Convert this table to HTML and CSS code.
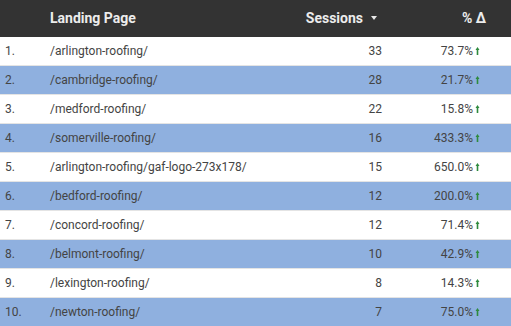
FILE: index.html
```html
<!DOCTYPE html>
<html>
<head>
<meta charset="utf-8">
<link rel="stylesheet" href="styles.css">
</head>
<body>
<div class="table">
  <div class="row head">
    <div class="c-num"></div>
    <div class="c-page">Landing Page</div>
    <div class="c-sess">Sessions <svg class="sort" width="6" height="4" viewBox="0 0 6 4"><path d="M0 0H6L3 4Z" fill="#e8e8e8"/></svg></div>
    <div class="c-pct">% Δ</div>
  </div>
  <div class="row"><div class="c-num">1.</div><div class="c-page">/arlington-roofing/</div><div class="c-sess">33</div><div class="c-pct">73.7%<svg class="up" width="11" height="8" viewBox="0 0 11 8"><path d="M2.5 0L4.5 3H3.3V8H1.7V3H0.5Z" fill="#2e8b3e"/></svg></div></div>
  <div class="row alt"><div class="c-num">2.</div><div class="c-page">/cambridge-roofing/</div><div class="c-sess">28</div><div class="c-pct">21.7%<svg class="up" width="11" height="8" viewBox="0 0 11 8"><path d="M2.5 0L4.5 3H3.3V8H1.7V3H0.5Z" fill="#2e8b3e"/></svg></div></div>
  <div class="row"><div class="c-num">3.</div><div class="c-page">/medford-roofing/</div><div class="c-sess">22</div><div class="c-pct">15.8%<svg class="up" width="11" height="8" viewBox="0 0 11 8"><path d="M2.5 0L4.5 3H3.3V8H1.7V3H0.5Z" fill="#2e8b3e"/></svg></div></div>
  <div class="row alt"><div class="c-num">4.</div><div class="c-page">/somerville-roofing/</div><div class="c-sess">16</div><div class="c-pct">433.3%<svg class="up" width="11" height="8" viewBox="0 0 11 8"><path d="M2.5 0L4.5 3H3.3V8H1.7V3H0.5Z" fill="#2e8b3e"/></svg></div></div>
  <div class="row"><div class="c-num">5.</div><div class="c-page">/arlington-roofing/gaf-logo-273x178/</div><div class="c-sess">15</div><div class="c-pct">650.0%<svg class="up" width="11" height="8" viewBox="0 0 11 8"><path d="M2.5 0L4.5 3H3.3V8H1.7V3H0.5Z" fill="#2e8b3e"/></svg></div></div>
  <div class="row alt"><div class="c-num">6.</div><div class="c-page">/bedford-roofing/</div><div class="c-sess">12</div><div class="c-pct">200.0%<svg class="up" width="11" height="8" viewBox="0 0 11 8"><path d="M2.5 0L4.5 3H3.3V8H1.7V3H0.5Z" fill="#2e8b3e"/></svg></div></div>
  <div class="row"><div class="c-num">7.</div><div class="c-page">/concord-roofing/</div><div class="c-sess">12</div><div class="c-pct">71.4%<svg class="up" width="11" height="8" viewBox="0 0 11 8"><path d="M2.5 0L4.5 3H3.3V8H1.7V3H0.5Z" fill="#2e8b3e"/></svg></div></div>
  <div class="row alt"><div class="c-num">8.</div><div class="c-page">/belmont-roofing/</div><div class="c-sess">10</div><div class="c-pct">42.9%<svg class="up" width="11" height="8" viewBox="0 0 11 8"><path d="M2.5 0L4.5 3H3.3V8H1.7V3H0.5Z" fill="#2e8b3e"/></svg></div></div>
  <div class="row"><div class="c-num">9.</div><div class="c-page">/lexington-roofing/</div><div class="c-sess">8</div><div class="c-pct">14.3%<svg class="up" width="11" height="8" viewBox="0 0 11 8"><path d="M2.5 0L4.5 3H3.3V8H1.7V3H0.5Z" fill="#2e8b3e"/></svg></div></div>
  <div class="row alt"><div class="c-num">10.</div><div class="c-page">/newton-roofing/</div><div class="c-sess">7</div><div class="c-pct">75.0%<svg class="up" width="11" height="8" viewBox="0 0 11 8"><path d="M2.5 0L4.5 3H3.3V8H1.7V3H0.5Z" fill="#2e8b3e"/></svg></div></div>
</div>
</body>
</html>
```
FILE: styles.css
```css
html, body {
  margin: 0;
  padding: 0;
  background: #ffffff;
}
body {
  font-family: Roboto, "Liberation Sans", sans-serif;
  width: 511px;
  height: 326px;
  overflow: hidden;
}
.table {
  display: flex;
  flex-direction: column;
}
.row {
  display: grid;
  grid-template-columns: 50px 250px 82px 104px;
  align-items: center;
  height: 28px;
  border-bottom: 1px solid #e4e4e4;
  font-size: 12px;
  color: #444444;
  background: #ffffff;
}
.row.alt {
  background: #8fb0df;
}
.row.head {
  height: 36px;
  border-bottom: 1px solid #333333;
  background: #333333;
  color: #ececec;
  font-size: 14px;
  font-weight: 700;
}
.c-num {
  padding-left: 5px;
}
.c-sess {
  text-align: right;
}
.c-pct {
  display: flex;
  justify-content: flex-end;
  align-items: center;
}
.head .c-sess {
  display: flex;
  justify-content: flex-end;
  align-items: center;
  padding-right: 5px;
}
.sort {
  margin-left: 8px;
}
.up {
  margin-left: 2px;
}
```
